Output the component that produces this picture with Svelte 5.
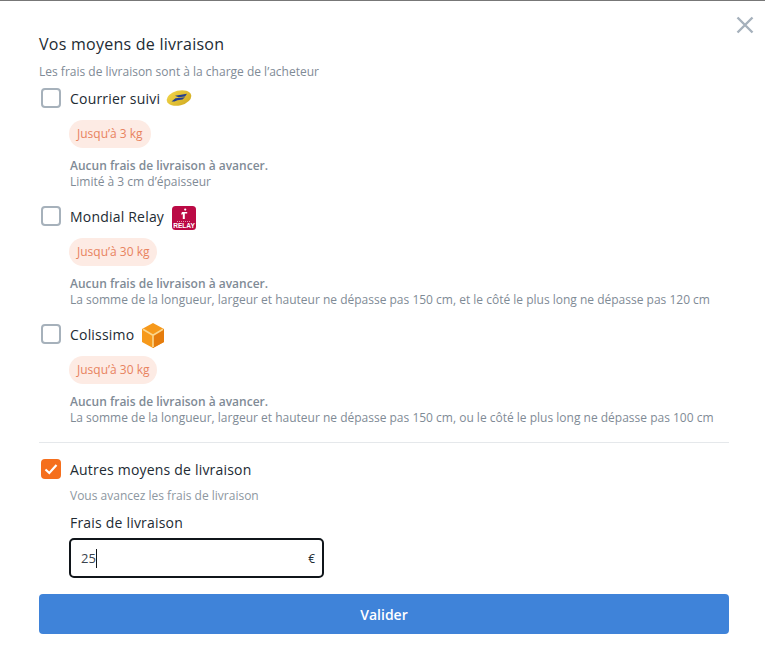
<script>
  const options = [
    { name: 'Courrier suivi', icon: 'laposte', weight: "Jusqu’à 3 kg", note: 'Limité à 3 cm d’épaisseur' },
    { name: 'Mondial Relay', icon: 'relay', weight: "Jusqu’à 30 kg", note: 'La somme de la longueur, largeur et hauteur ne dépasse pas 150 cm, et le côté le plus long ne dépasse pas 120 cm' },
    { name: 'Colissimo', icon: 'colissimo', weight: "Jusqu’à 30 kg", note: 'La somme de la longueur, largeur et hauteur ne dépasse pas 150 cm, ou le côté le plus long ne dépasse pas 100 cm' }
  ];
</script>

<div class="modal">
  <svg class="close" width="18" height="18" viewBox="0 0 18 18"><path d="M1.5 1.5L16.5 16.5M16.5 1.5L1.5 16.5" stroke="#a6b1bc" stroke-width="2.4" fill="none"/></svg>
  <h2>Vos moyens de livraison</h2>
  <p class="sub">Les frais de livraison sont à la charge de l’acheteur</p>
  <div class="opts">
    {#each options as o}
      <section class="opt">
        <div class="row">
          <span class="box"></span>
          <span class="name">{o.name}</span>
          {#if o.icon === 'laposte'}
            <svg class="logo poste" width="26" height="18" viewBox="0 0 26 18"><defs><linearGradient id="gp" x1="0" y1="0" x2="1" y2="1"><stop offset="0" stop-color="#f3d64a"/><stop offset="1" stop-color="#cfa91f"/></linearGradient></defs><ellipse cx="13" cy="9" rx="12.5" ry="7.4" fill="url(#gp)" transform="rotate(-14 13 9)"/><path d="M9 6.8L21 4.8L19 7.4L12.5 8.2zM5.5 12.6L9.5 9.2L19 8.2L16.5 10.6L11.5 11.2L8.5 12.6z" fill="#25408f"/></svg>
          {:else if o.icon === 'relay'}
            <svg class="logo relay" width="24" height="24" viewBox="0 0 24 24"><rect width="24" height="24" rx="3.5" fill="#bb0a45"/><circle cx="13.2" cy="3.6" r="1.1" fill="#fff"/><path d="M10 6h5.2v1.4h-2.4V13H10.8V8.2L9 8.6z" fill="#fff"/><path d="M5 15.5h14" stroke="#f3b6c8" stroke-width=".8" stroke-dasharray="1 1"/><text x="12" y="21.5" text-anchor="middle" font-family="Liberation Sans, sans-serif" font-size="6.6" font-weight="700" fill="#fff">RELAY</text></svg>
          {:else}
            <svg class="logo colis" width="22" height="25" viewBox="0 0 22 25"><path d="M11 0L22 6V19L11 25L0 19V6z" fill="#f6991b"/><path d="M11 12.5L22 6V19L11 25z" fill="#e57c0d"/><path d="M1 6.3L11 12.2L21 6.3M11 12.2V24" stroke="#fbd68c" stroke-width="1.6" fill="none"/></svg>
          {/if}
        </div>
        <div class="detail">
          <span class="pill">{o.weight}</span>
          <p class="note"><b>Aucun frais de livraison à avancer.</b><br />{o.note}</p>
        </div>
      </section>
    {/each}
  </div>
  <hr />
  <div class="row">
    <span class="box on"><svg width="20" height="20" viewBox="0 0 20 20"><path d="M4.5 10.5L8.3 14L15.5 6" stroke="#fff" stroke-width="2.2" fill="none"/></svg></span>
    <span class="name">Autres moyens de livraison</span>
  </div>
  <div class="detail">
    <p class="hint">Vous avancez les frais de livraison</p>
    <div class="label">Frais de livraison</div>
    <div class="field"><span class="val">25</span><span>€</span></div>
  </div>
  <button>Valider</button>
</div>

<style>
  :global(body) { margin: 0; background: #fff; font-family: "Open Sans", sans-serif; }
  .modal { position: relative; height: 668px; box-sizing: border-box; padding: 32px 36px 0 39px; border-top: 1px solid #777; color: #222b33; }
  .close { position: absolute; top: 15px; right: 11px; }
  h2 { margin: 0; font-size: 16px; line-height: 22px; font-weight: 500; letter-spacing: .25px; }
  .sub { margin: 9px 0 0; font-size: 12px; line-height: 16px; color: #7f8b96; }
  .opts { margin-top: 6px; }
  .opt { height: 118px; }
  .row { display: flex; align-items: center; gap: 9px; height: 24px; }
  .box { width: 20px; height: 20px; box-sizing: border-box; margin-left: 2px; border: 2px solid #a6b1bb; border-radius: 4px; display: block; }
  .box.on { background: #f56f1d; border: 0; }
  .box.on svg { display: block; }
  .name { font-size: 14px; font-weight: 500; letter-spacing: .2px; }
  .poste { margin-left: -3px; }
  .relay { margin: 4px 0 0 -1px; }
  .colis { margin: 3px 0 0 -1px; }
  .detail { padding-left: 31px; }
  .pill { display: block; width: fit-content; margin: 10px 0 0 -1px; background: #fdebe4; color: #e8835f; border-radius: 14px; font-size: 12px; line-height: 28px; padding: 0 8px; }
  .note { margin: 9.5px 0 0; font-size: 12px; line-height: 16.5px; color: #7f8b96; }
  .note b { font-weight: 600; }
  hr { margin: 2px 0 14px; border: 0; border-top: 1px solid #e5e8eb; }
  .hint { margin: 7px 0 0; font-size: 12px; line-height: 16px; color: #8d97a1; }
  .label { margin-top: 9px; font-size: 14px; font-weight: 500; line-height: 20px; letter-spacing: .2px; }
  .field { display: flex; align-items: center; justify-content: space-between; width: 255px; height: 40px; box-sizing: border-box; margin: 5px 0 0 -1px; border: 2px solid #10151a; border-radius: 5px; padding: 0 7px 0 10px; font-size: 12px; }
  .val { font-size: 13px; line-height: 19px; color: #3a444e; border-right: 1px solid #10151a; }
  button { display: block; width: 100%; height: 40px; margin-top: 16px; background: #3f83d9; color: #fff; border: 0; border-radius: 4px; font: 600 14px "Open Sans", sans-serif; }
</style>
